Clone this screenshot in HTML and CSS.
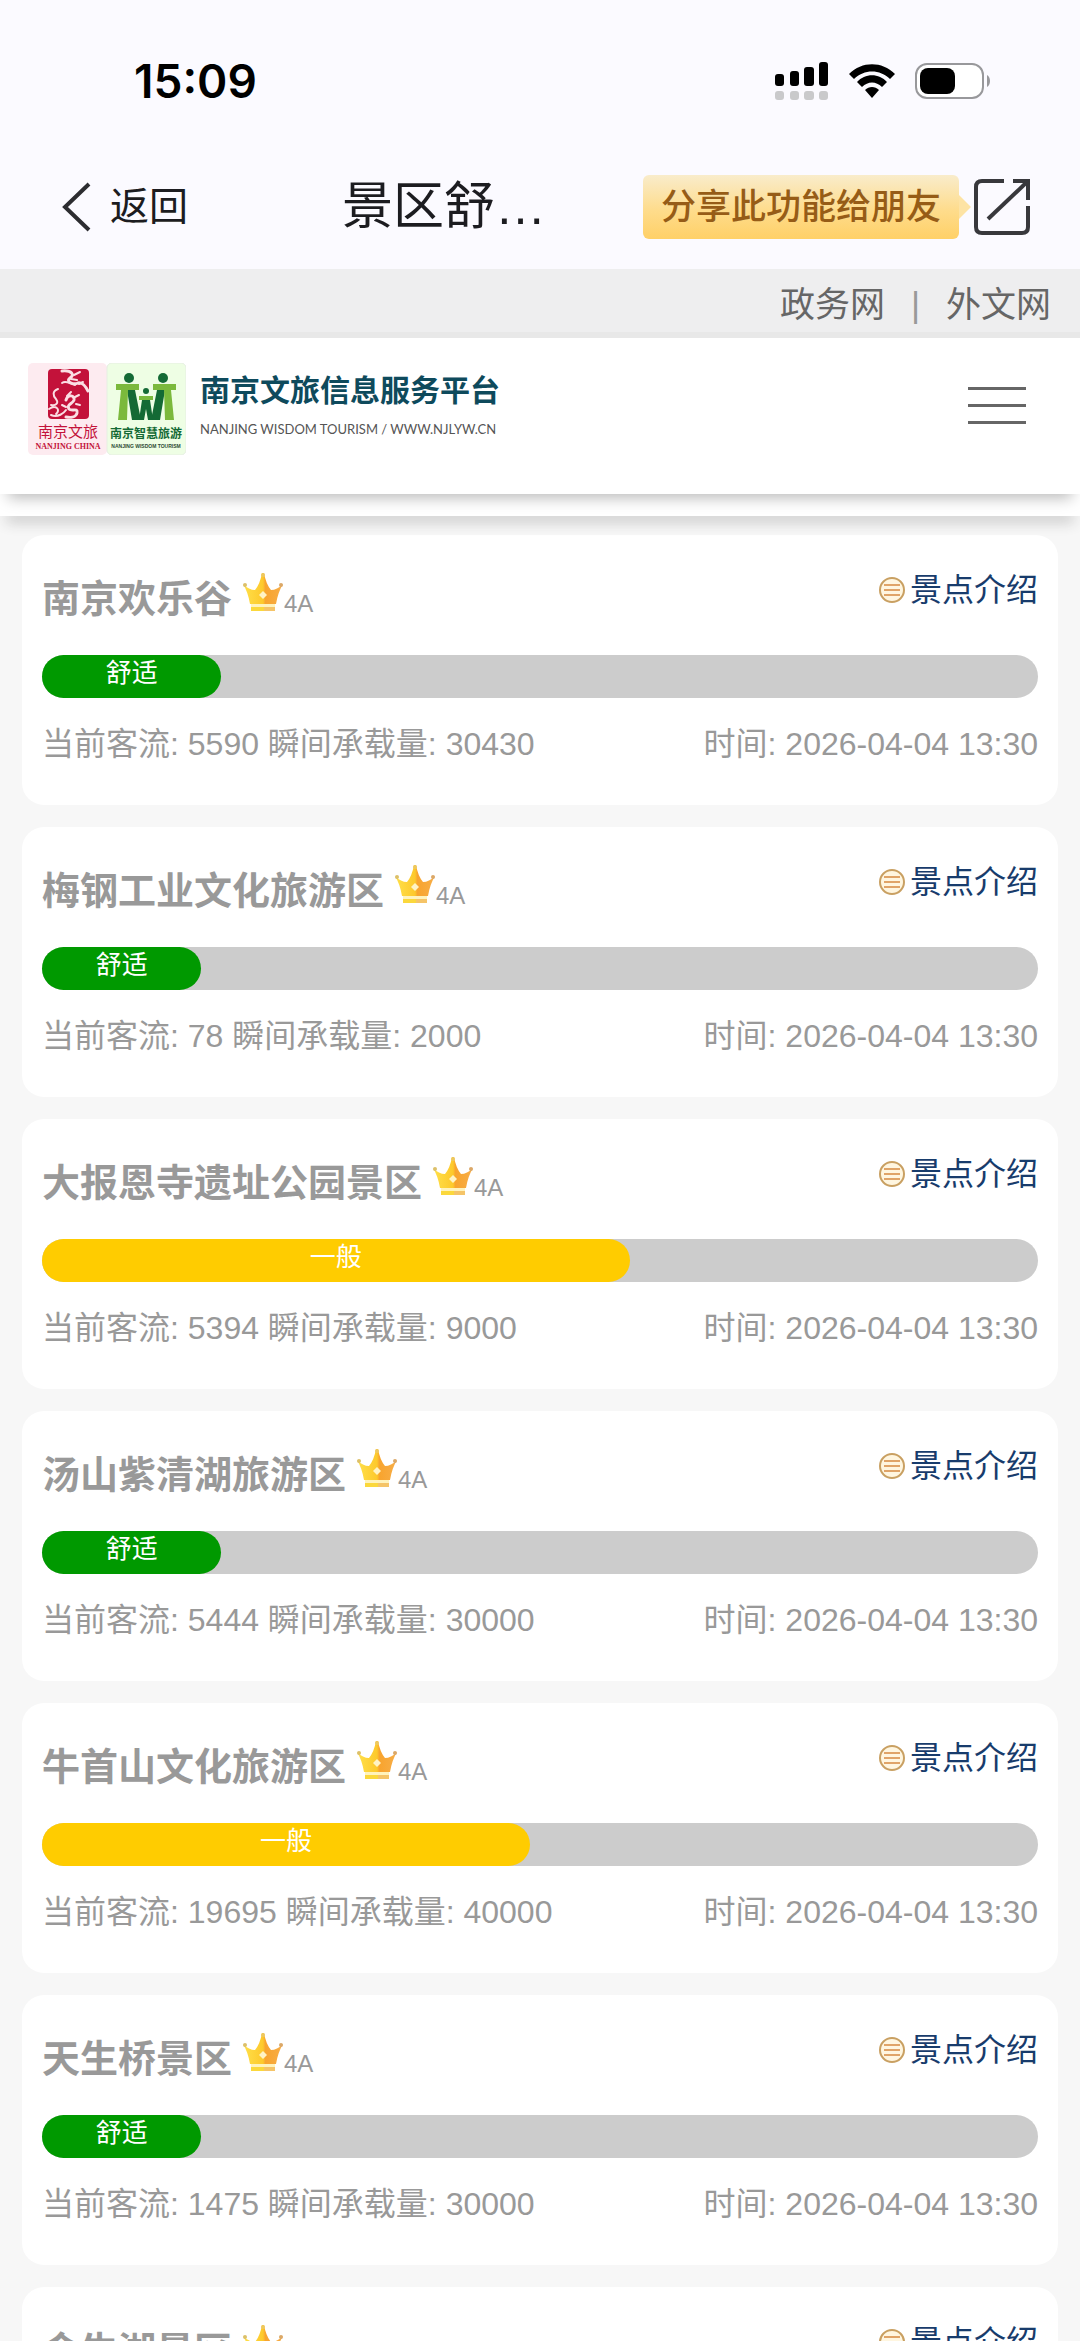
FILE: index.html
```html
<!DOCTYPE html>
<html lang="zh-CN">
<head>
<meta charset="utf-8">
<meta name="viewport" content="width=device-width, initial-scale=1">
<title>景区舒适度</title>
<link rel="stylesheet" href="styles.css">
</head>
<body>
<svg class="defs" aria-hidden="true">
  <defs>
    <linearGradient id="gold" x1="0" y1="0" x2="1" y2="0">
      <stop offset="0" stop-color="#ffe04a"/><stop offset=".5" stop-color="#fdc92c"/><stop offset=".56" stop-color="#f8a42e"/><stop offset="1" stop-color="#f7ae48"/>
    </linearGradient>
    <symbol id="crown" viewBox="0 0 42 40">
      <path d="M1 12 Q7 18 13 18 Q18 12 20 1 H22 Q24 12 29 18 Q35 18 41 12 Q36 20 34 32 H8 Q6 20 1 12 Z" fill="url(#gold)"/>
      <circle cx="3" cy="13" r="2" fill="#dcc06a"/><circle cx="39" cy="13" r="2" fill="#dba868"/><circle cx="21" cy="3" r="2" fill="#edc860"/>
      <path d="M21 19 L25 23 L21 27 L17 23 Z" fill="#fff3c4"/>
      <path d="M9 32 H33 V35 H9 Z" fill="#fff3bc"/>
      <path d="M9 35 H33 V39 H9 Z" fill="#fbd83c"/><path d="M22 35 H33 V39 H22 Z" fill="#f5c468"/>
    </symbol>
    <symbol id="intro" viewBox="0 0 28 28">
      <circle cx="14" cy="14" r="12" fill="#fff6e0" stroke="#c9a062" stroke-width="2"/>
      <path d="M6 9 H22 M6 14 H22 M6 19 H22" stroke="#e0a468" stroke-width="2"/>
    </symbol>
  </defs>
</svg>
<div class="app">
  <div class="status">
    <time class="clock">15:09</time>
    <div class="indicators">
      <svg width="54" height="40" viewBox="0 0 54 40" aria-label="信号">
        <g fill="#000"><rect x="0" y="13" width="9" height="12" rx="3"/><rect x="15" y="10" width="9" height="15" rx="3"/><rect x="29" y="6" width="10" height="19" rx="3"/><rect x="44" y="1" width="9" height="24" rx="3"/></g>
        <g fill="#c9c9cb"><rect x="0" y="30" width="9" height="9" rx="3"/><rect x="15" y="30" width="9" height="9" rx="3"/><rect x="29" y="30" width="10" height="9" rx="3"/><rect x="44" y="30" width="9" height="9" rx="3"/></g>
      </svg>
      <svg width="46" height="36" viewBox="0 0 46 36" aria-label="无线网络">
        <path d="M0 11 C13 -2 33 -2 46 11 L41 16 C31 6 15 6 5 16 Z"/>
        <path d="M8 19 C16 10 30 10 38 19 L33 24 C27 18 19 18 13 24 Z"/>
        <path d="M16 27 C20 23 26 23 30 27 L23 35 Z"/>
      </svg>
      <svg width="76" height="38" viewBox="0 0 76 38" aria-label="电池">
        <rect x="1" y="2" width="67" height="34" rx="11" fill="#fff" stroke="#98989b" stroke-width="2"/>
        <rect x="5" y="6" width="35" height="26" rx="8"/>
        <path d="M72 13 C76 15 76 23 72 25 Z" fill="#98989b"/>
      </svg>
    </div>
  </div>

  <nav class="nav">
    <button class="back" type="button">
      <svg width="32" height="50" viewBox="0 0 32 50" fill="none" stroke="#2c2c30" stroke-width="4" aria-hidden="true"><path d="M29 2 L5 25 L29 48"/></svg>
      返回
    </button>
    <h1 class="title">景区舒…</h1>
    <div class="share">
      <span class="tip">分享此功能给朋友</span>
      <button class="share-btn" type="button" aria-label="分享">
        <svg width="56" height="56" viewBox="0 0 56 56" fill="none" stroke="#38383c" stroke-width="4"><path d="M30 2 H8 Q2 2 2 8 V48 Q2 54 8 54 H48 Q54 54 54 48 V27"/><path d="M39 2 H54 V21"/><path d="M54 2 L14 40"/></svg>
      </button>
    </div>
  </nav>

  <div class="topbar">
    <a href="#gov">政务网</a><span>|</span><a href="#lang">外文网</a>
  </div>

  <header class="site">
    <a class="brand" href="#home">
      <svg width="158" height="92" viewBox="0 0 158 92" aria-hidden="true">
        <rect x="0" y="0" width="79" height="92" rx="5" fill="#fdebf0"/>
        <rect x="79" y="0" width="79" height="92" rx="5" fill="#eefee4" stroke="#e6eee2"/>
        <rect x="20" y="6" width="41" height="50" rx="4" fill="#c3123a"/>
        <g fill="none" stroke="#fbdfe4" stroke-linecap="round" stroke-linejoin="round">
          <path d="M34 8 C44 7 47 12 42 15 C37 19 46 22 50 20 C54 19 58 24 60 28" stroke-width="3"/>
          <path d="M34 20 C38 17 42 21 47 22 M46 12 L52 9 M43 16 L49 17 M51 21 L55 19" stroke-width="2"/>
          <path d="M30 26 C24 28 25 33 28 36 C31 40 28 43 23 42 M21 46 C28 41 33 47 28 51 M23 52 C30 55 36 50 38 47" stroke-width="2"/>
          <path d="M38 37 C40 31 47 32 46 37 C45 41 38 41 41 46 C44 49 50 44 49 50 C48 54 43 55 38 54" stroke-width="3"/>
          <path d="M39 33 L43 29 M47 34 L51 32 M48 41 L52 42 M34 42 L38 44" stroke-width="2"/>
        </g>
        <text x="40" y="74" class="logo-red">南京文旅</text>
        <text x="40" y="86" class="logo-red-en">NANJING CHINA</text>
        <g fill="#146a35">
          <circle cx="101" cy="15" r="5"/><circle cx="135" cy="15" r="5"/><circle cx="118" cy="28" r="3"/>
          <path d="M99 27 H107 L113 57 H104 Z M137 27 H129 L123 57 H132 Z"/>
          <path d="M114 37 H122 L125 57 H120 L118 46 L116 57 H111 Z"/>
        </g>
        <g fill="#7bb93c"><path d="M88 21 H111 V27 H100 L99 57 H90 L93 27 H88 Z M148 21 H125 V27 H136 L137 57 H146 L143 27 H148 Z"/><path d="M111 33 H125 V37 H111 Z"/></g>
        <text x="118" y="75" class="logo-green">南京智慧旅游</text>
        <text x="118" y="85" class="logo-green-en">NANJING WISDOM TOURISM</text>
      </svg>
      <span class="brand-text">
        <strong>南京文旅信息服务平台</strong>
        <small>NANJING WISDOM TOURISM / WWW.NJLYW.CN</small>
      </span>
    </a>
    <button class="menu" type="button" aria-label="菜单"><i></i><i></i><i></i></button>
  </header>
  <div class="strip"></div>

  <main class="list">
    <article class="card">
      <div class="head"><h2>南京欢乐谷</h2><svg class="crown"><use href="#crown"/></svg><span class="grade">4A</span><a class="intro" href="#s1"><svg><use href="#intro"/></svg>景点介绍</a></div>
      <div class="bar"><div class="fill easy" style="width:18%">舒适</div></div>
      <div class="info"><span>当前客流: 5590 瞬间承载量: 30430</span><span>时间: 2026-04-04 13:30</span></div>
    </article>
    <article class="card">
      <div class="head"><h2>梅钢工业文化旅游区</h2><svg class="crown"><use href="#crown"/></svg><span class="grade">4A</span><a class="intro" href="#s2"><svg><use href="#intro"/></svg>景点介绍</a></div>
      <div class="bar"><div class="fill easy" style="width:16%">舒适</div></div>
      <div class="info"><span>当前客流: 78 瞬间承载量: 2000</span><span>时间: 2026-04-04 13:30</span></div>
    </article>
    <article class="card">
      <div class="head"><h2>大报恩寺遗址公园景区</h2><svg class="crown"><use href="#crown"/></svg><span class="grade">4A</span><a class="intro" href="#s3"><svg><use href="#intro"/></svg>景点介绍</a></div>
      <div class="bar"><div class="fill normal" style="width:59%">一般</div></div>
      <div class="info"><span>当前客流: 5394 瞬间承载量: 9000</span><span>时间: 2026-04-04 13:30</span></div>
    </article>
    <article class="card">
      <div class="head"><h2>汤山紫清湖旅游区</h2><svg class="crown"><use href="#crown"/></svg><span class="grade">4A</span><a class="intro" href="#s4"><svg><use href="#intro"/></svg>景点介绍</a></div>
      <div class="bar"><div class="fill easy" style="width:18%">舒适</div></div>
      <div class="info"><span>当前客流: 5444 瞬间承载量: 30000</span><span>时间: 2026-04-04 13:30</span></div>
    </article>
    <article class="card">
      <div class="head"><h2>牛首山文化旅游区</h2><svg class="crown"><use href="#crown"/></svg><span class="grade">4A</span><a class="intro" href="#s5"><svg><use href="#intro"/></svg>景点介绍</a></div>
      <div class="bar"><div class="fill normal" style="width:49%">一般</div></div>
      <div class="info"><span>当前客流: 19695 瞬间承载量: 40000</span><span>时间: 2026-04-04 13:30</span></div>
    </article>
    <article class="card">
      <div class="head"><h2>天生桥景区</h2><svg class="crown"><use href="#crown"/></svg><span class="grade">4A</span><a class="intro" href="#s6"><svg><use href="#intro"/></svg>景点介绍</a></div>
      <div class="bar"><div class="fill easy" style="width:16%">舒适</div></div>
      <div class="info"><span>当前客流: 1475 瞬间承载量: 30000</span><span>时间: 2026-04-04 13:30</span></div>
    </article>
    <article class="card">
      <div class="head"><h2>金牛湖景区</h2><svg class="crown"><use href="#crown"/></svg><span class="grade">4A</span><a class="intro" href="#s7"><svg><use href="#intro"/></svg>景点介绍</a></div>
    </article>
  </main>
</div>
</body>
</html>
```
FILE: styles.css
```css
* { box-sizing: border-box; }
body {
  margin: 0;
  background: #f7f7f7;
  font-family: "Liberation Sans", "Noto Sans CJK SC", sans-serif;
}
a { color: inherit; text-decoration: none; }
button { margin: 0; padding: 0; border: 0; background: none; font: inherit; color: inherit; }
svg { display: block; flex: none; }
.defs { position: absolute; width: 0; height: 0; }

.app { display: flex; flex-direction: column; height: 100vh; overflow: hidden; }
.app > * { flex: none; }

/* status bar */
.status {
  display: flex;
  justify-content: space-between;
  align-items: center;
  padding: 52px 89px 35px 134px;
  background: #fbfaff;
}
.clock { font: 600 46px/58px Inter, sans-serif; color: #000; }
.indicators { display: flex; align-items: center; gap: 20px; }

/* navigation */
.nav {
  display: flex;
  align-items: center;
  height: 124px;
  padding: 0 50px 0 60px;
  background: #fbfaff;
  color: #1c1c20;
}
.back { display: flex; align-items: center; gap: 18px; font-size: 39px; line-height: 56px; }
.title { margin: 0 0 0 154px; font-weight: 400; font-size: 51px; line-height: 72px; }
.share { display: flex; align-items: center; gap: 15px; margin-left: auto; }
.tip {
  position: relative;
  padding: 0 18px;
  border-radius: 6px;
  background: linear-gradient(#f9eccb, #fedc8c 55%, #ffd067);
  color: #965c17;
  font-size: 35px;
  font-weight: 500;
  line-height: 64px;
}
.tip::after {
  content: "";
  position: absolute;
  left: 100%;
  top: 20px;
  border: 12px solid transparent;
  border-left-color: #fde3a4;
  border-right-width: 0;
}

/* site links */
.topbar {
  display: flex;
  justify-content: flex-end;
  gap: 26px;
  padding: 9px 29px 1px;
  border-bottom: 6px solid #e8e8e8;
  background: #eeeeef;
  color: #666;
  font-size: 35px;
  line-height: 53px;
}
.topbar span { color: #999; }

/* brand header */
.site {
  position: relative;
  display: flex;
  justify-content: space-between;
  align-items: flex-start;
  height: 156px;
  padding: 25px 54px 0 28px;
  background: #fff;
  box-shadow: 0 12px 14px -8px #bbb;
  z-index: 2;
}
.brand { display: flex; gap: 14px; }
.brand-text { display: flex; flex-direction: column; padding-top: 6px; }
.brand strong { color: #0e4a5c; font-size: 30px; line-height: 44px; }
.brand small { color: #555; font: 13px/32px Lato, sans-serif; }
.logo-red { fill: #c3123a; font-size: 15px; text-anchor: middle; }
.logo-red-en { fill: #c3123a; font: bold 8px "Liberation Serif", serif; text-anchor: middle; }
.logo-green { fill: #146a35; font-size: 12px; font-weight: 700; text-anchor: middle; }
.logo-green-en { fill: #2c4a34; font-size: 5px; font-weight: 700; text-anchor: middle; }
.menu { display: flex; flex-direction: column; gap: 14px; width: 58px; margin-top: 24px; }
.menu i { display: block; height: 3px; background: #666; }
.strip {
  position: relative;
  height: 22px;
  background: #fff;
  box-shadow: 0 12px 14px -6px #c4c4c4;
  z-index: 1;
}

/* attraction cards */
.app .list {
  flex: 1;
  min-height: 0;
  overflow-y: auto;
  scrollbar-width: none;
  padding: 19px 22px;
  display: flex;
  flex-direction: column;
  gap: 22px;
  color: #999;
}
.card { flex: none; min-height: 270px; padding: 28px 20px 36px; border-radius: 22px; background: #fff; }
.head { display: flex; align-items: baseline; height: 72px; }
h2 { margin: 0; font-size: 38px; line-height: 72px; font-weight: 700; }
.crown { width: 42px; height: 40px; margin: 0 0 7px 10px; }
.grade { font-size: 24px; }
.intro {
  display: flex;
  align-items: center;
  align-self: flex-start;
  gap: 4px;
  margin-left: auto;
  color: #183c6c;
  font-size: 32px;
  line-height: 54px;
}
.intro svg { width: 28px; height: 28px; }
.bar { height: 43px; margin-top: 20px; border-radius: 22px; background: #ccc; }
.fill { height: 43px; border-radius: 22px; color: #fff; font-size: 26px; line-height: 36px; text-align: center; }
.easy { background: #090; }
.normal { background: #fc0; }
.info { display: flex; justify-content: space-between; margin-top: 22px; font-size: 32px; line-height: 48px; }
```
